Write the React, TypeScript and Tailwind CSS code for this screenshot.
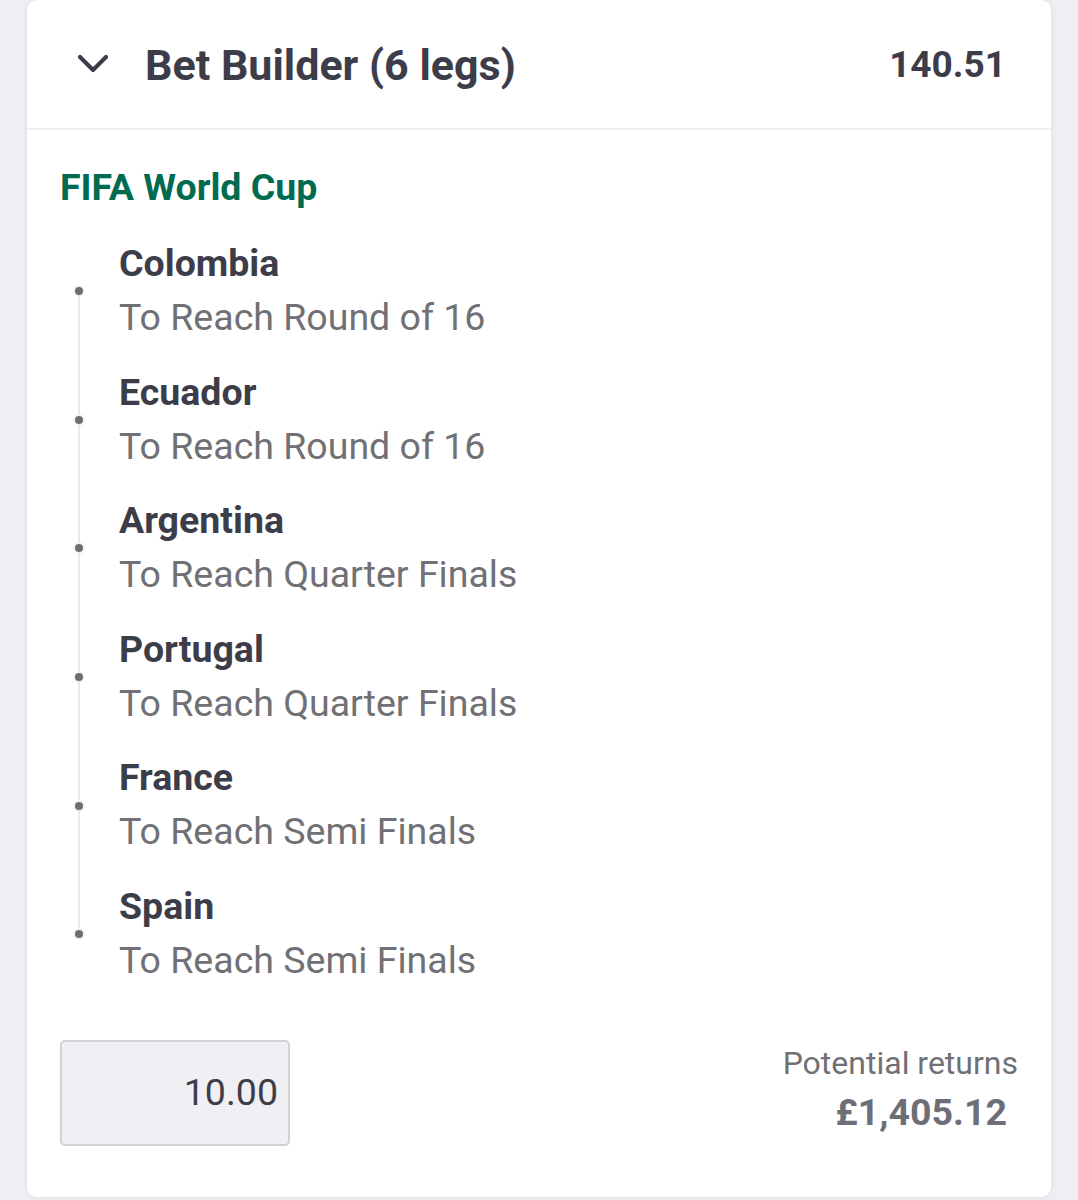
import React from "react";

const legs = [
  { team: "Colombia", market: "To Reach Round of 16" },
  { team: "Ecuador", market: "To Reach Round of 16" },
  { team: "Argentina", market: "To Reach Quarter Finals" },
  { team: "Portugal", market: "To Reach Quarter Finals" },
  { team: "France", market: "To Reach Semi Finals" },
  { team: "Spain", market: "To Reach Semi Finals" },
];

export default function App() {
  return (
    <div
      className="w-[1078px] h-[1200px] bg-[#eeeef3] overflow-hidden pl-[27px] pr-[27px]"
      style={{ fontFamily: "Roboto, 'Liberation Sans', sans-serif" }}
    >
      <div className="h-[1197px] bg-white rounded-[10px] shadow-[0_0_6px_rgba(0,0,0,0.08)] flex flex-col">
        {/* Header */}
        <div className="h-[130px] flex items-center pl-[50px] pr-[45px] border-b-2 border-[#f0f0f4]">
          <svg width="32" height="22" viewBox="0 0 32 22" className="shrink-0">
            <polyline
              points="3,4 16,17 29,4"
              fill="none"
              stroke="#3d3d4a"
              strokeWidth="4.2"
              strokeLinecap="round"
              strokeLinejoin="round"
            />
          </svg>
          <div className="ml-[36px] text-[43px] font-bold text-[#3d3d4a] leading-none pt-[2px]">
            Bet Builder (6 legs)
          </div>
          <div className="ml-auto text-[37px] font-bold text-[#3d3d4a] leading-none">140.51</div>
        </div>

        {/* Content */}
        <div className="pl-[33px] pr-[33px] pt-[34px] flex flex-col">
          <div className="text-[37.5px] font-bold text-[#006b50] leading-[46px]">FIFA World Cup</div>
          <div className="mt-[17px] flex flex-col">
            {legs.map((l, i) => (
              <div key={l.team} className="flex h-[128.6px]">
                <div className="w-[38px] mr-[21px] shrink-0 flex flex-col items-center">
                  <div className={`w-[2px] flex-1 ${i === 0 ? "bg-transparent" : "bg-[#e8e8ee]"}`} />
                  <div className="w-[8px] h-[8px] rounded-full bg-[#6d6d72] ring-2 ring-[#f4f4f7]" />
                  <div className={`w-[2px] flex-1 ${i === legs.length - 1 ? "bg-transparent" : "bg-[#e8e8ee]"}`} />
                </div>
                <div className="flex flex-col pt-[9px]">
                  <div className="text-[37.5px] font-bold text-[#3d3d4a] leading-[54px]">{l.team}</div>
                  <div className="text-[37.5px] text-[#707075] leading-[54px]">{l.market}</div>
                </div>
              </div>
            ))}
          </div>

          {/* Footer */}
          <div className="mt-[41px] flex items-start justify-between">
            <div className="w-[230px] h-[106px] bg-[#efeff4] border-2 border-[#d2d2d6] rounded-[5px] flex items-center justify-end pr-[10px]">
              <span className="text-[37.5px] text-[#3d3d4a]">10.00</span>
            </div>
            <div className="flex flex-col items-end">
              <div className="text-[32px] text-[#707075] leading-[46px]">Potential returns</div>
              <div className="text-[37.5px] font-bold text-[#6e6e78] leading-[52px] pr-[11px]">£1,405.12</div>
            </div>
          </div>
        </div>
      </div>
    </div>
  );
}
